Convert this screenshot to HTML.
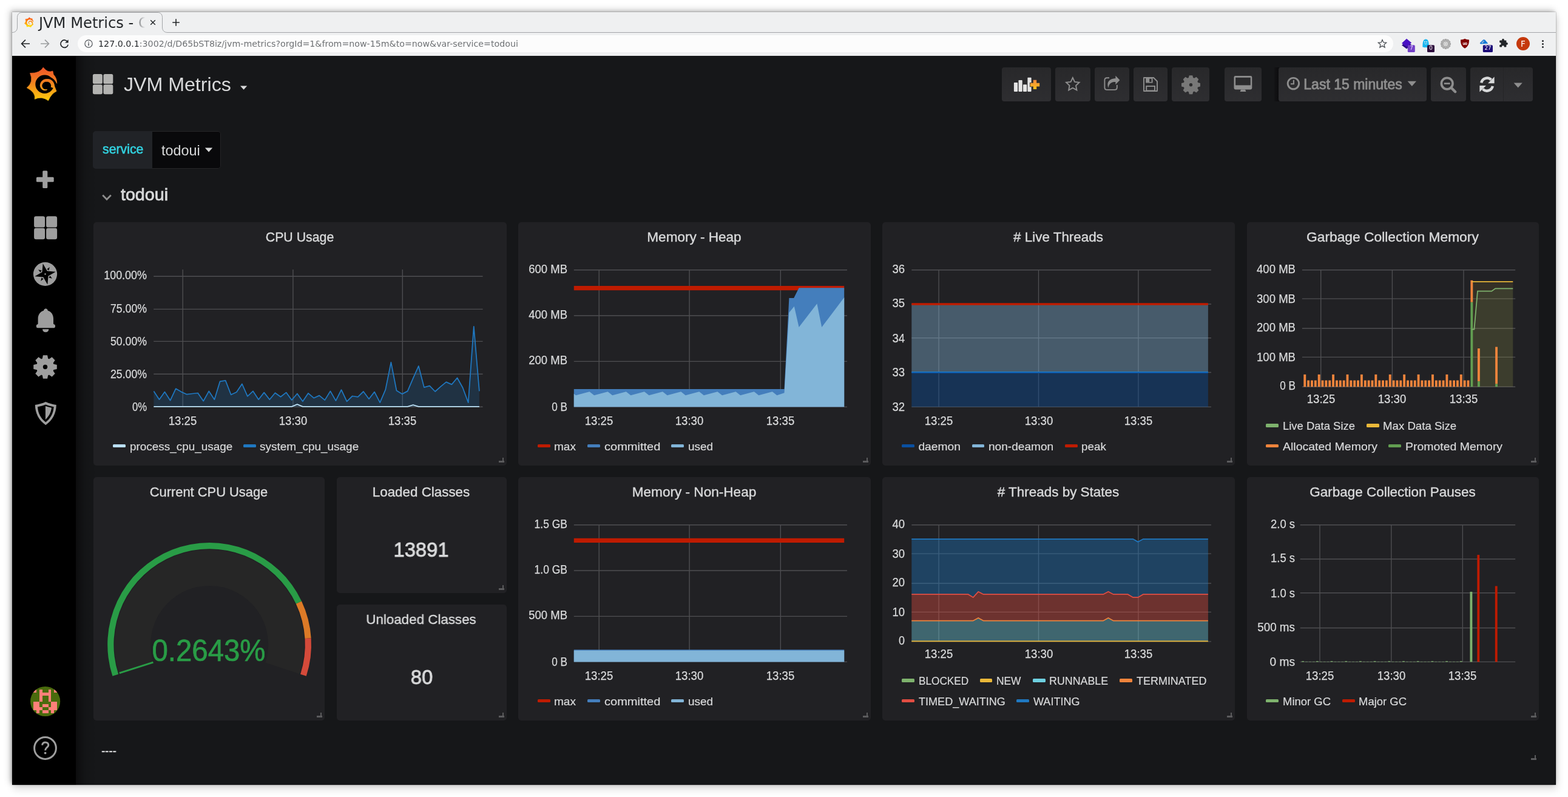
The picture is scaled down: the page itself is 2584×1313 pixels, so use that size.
<!DOCTYPE html>
<html lang="en"><head><meta charset="utf-8"><title>JVM Metrics - Grafana</title>
<style>
html,body{margin:0;padding:0;background:#fff;}
body{width:2584px;height:1313px;position:relative;overflow:hidden;font-family:"Liberation Sans",sans-serif;}
div,span,svg{position:absolute;display:block;}
.t{white-space:pre;line-height:1;}
.win{left:20px;top:20px;width:2544px;height:1273px;background:#161719;box-shadow:0 0 1.5px rgba(0,0,0,.45),-2px -2px 5px rgba(0,0,0,.12),-3px -3px 11px rgba(0,0,0,.22),2px 7px 12px rgba(0,0,0,.14);}

.root{left:0;top:0;width:2584px;height:1313px;will-change:transform;}
.panel{background:#212124;border-radius:5px;}
</style></head>
<body>
<div class="root">
<div class="win"></div>
<div style="left:20.00px;top:20.00px;width:2544.00px;height:72.00px;background:#eff0f1;"></div>
<svg style="left:20px;top:20px;" width="2544" height="36" viewBox="20 20 2544 36"><path d="M20 53.5 C25 53.5 28.5 50.5 28.5 45 L28.5 28.5 C28.5 24 31.5 20.5 36 20.5 L260 20.5 C264.5 20.5 267.5 24 267.5 28.5 L267.5 45 C267.5 50.5 271 53.5 276 53.5 L2564 53.5" fill="none" stroke="#a3a5a8" stroke-width="1"/></svg>
<svg style="left:39px;top:28px;" width="18" height="18" viewBox="0 0 18 18"><g transform="translate(-2.012 -2.835) scale(0.018527)"><defs><linearGradient id="fg" gradientUnits="userSpaceOnUse" x1="0" y1="180" x2="0" y2="1076"><stop offset="0" stop-color="#ff4a0a"/><stop offset="0.45" stop-color="#ff8a08"/><stop offset="1" stop-color="#fff000"/></linearGradient></defs><path d="M610 180 Q732 341 865 278 L886 372 A340 340 0 0 1 976 612 Q905 470 800 440 L893 642 L921 706 L966 824 Q828 886 745 1076 Q568 948 380 1036 Q416 861 168 730 Q361 571 254 336 Q524 342 610 180 Z" fill="url(#fg)" stroke="url(#fg)" stroke-width="12" stroke-linejoin="round"/><circle cx="648" cy="634" r="250" fill="#eff0f1"/><path d="M911 749 L915 730 L917 710 L917 691 L915 672 L913 653 L908 635 L903 618 L896 601 L887 585 L878 570 L867 555 L854 542 L841 531 L827 520 L812 511 L797 504 L781 498 L765 493 L749 490 L732 489 L716 489 L700 490 L684 491 L668 493 L653 497 L638 502 L624 508 L610 516 L597 524 L584 534 L573 545 L562 556 L553 569 L544 582 L537 596 L531 610 L526 625 L523 641 L521 656 L520 672 L523 687 L527 702 L533 717 L539 731 L547 743 L556 755 L565 766 L576 776 L587 785 L600 792 L613 797 L626 800 L639 803 L652 804 L665 803 L677 802 L689 800 L700 796 L710 790 L719 782 L727 774 L727 772 L718 773 L709 772 L700 771 L691 773 L682 773 L673 773 L664 772 L654 770 L645 768 L636 764 L627 759 L618 754 L611 747 L604 739 L598 731 L592 722 L588 713 L584 703 L581 693 L579 683 L578 672 L580 661 L582 651 L585 641 L590 632 L594 623 L600 614 L606 606 L613 599 L621 593 L629 587 L637 582 L645 577 L654 573 L663 570 L672 568 L681 567 L691 567 L700 567 L709 567 L719 567 L728 568 L737 570 L746 573 L755 577 L763 582 L771 587 L779 593 L786 599 L793 607 L799 615 L805 623 L809 632 L813 642 L816 651 L819 662 L820 672 L820 682 L818 693 L816 703 L813 713 Z" fill="url(#fg)"/></g></svg>
<div style="left:62px;top:22px;width:183px;height:30px;overflow:hidden;-webkit-mask-image:linear-gradient(90deg,#000 0,#000 156px,transparent 177px);mask-image:linear-gradient(90deg,#000 0,#000 156px,transparent 177px);"><span class="t" style="left:1.90px;top:4.43px;font-size:24.2px;color:#232629;font-family:'DejaVu Sans',sans-serif;">JVM Metrics - Grafana</span></div>
<svg style="left:246px;top:31px;" width="12" height="12" viewBox="0 0 12 12"><path d="M2.2 2.2 L9.8 9.8 M9.8 2.2 L2.2 9.8" stroke="#232629" stroke-width="1.5" fill="none"/></svg>
<svg style="left:283px;top:30px;" width="14" height="14" viewBox="0 0 14 14"><path d="M7 1.2 V12.8 M1.2 7 H12.8" stroke="#232629" stroke-width="1.6" fill="none"/></svg>
<svg style="left:33px;top:63px;" width="18" height="18" viewBox="0 0 18 18"><path d="M16 9 H3.2 M9 2.6 L2.6 9 L9 15.4" stroke="#232629" stroke-width="1.7" fill="none"/></svg>
<svg style="left:65px;top:63px;" width="18" height="18" viewBox="0 0 18 18"><path d="M2 9 H14.8 M9 2.6 L15.4 9 L9 15.4" stroke="#9b9d9f" stroke-width="1.7" fill="none"/></svg>
<svg style="left:97px;top:63px;" width="18" height="18" viewBox="0 0 18 18"><path d="M14.6 6.2 A6.2 6.2 0 1 0 15.2 10.6" stroke="#232629" stroke-width="1.7" fill="none"/><path d="M15.6 2.2 V7.6 H10.2 Z" fill="#232629"/></svg>
<div style="left:128.00px;top:57.90px;width:2167.50px;height:28.20px;background:#fcfcfc;border-radius:14.1px;"></div>
<svg style="left:138px;top:64px;" width="16" height="16" viewBox="0 0 16 16"><circle cx="8" cy="8" r="6.1" fill="none" stroke="#4d5156" stroke-width="1.2"/><rect x="7.3" y="7" width="1.5" height="4.4" fill="#4d5156"/><rect x="7.3" y="4.6" width="1.5" height="1.5" fill="#4d5156"/></svg>
<span class="t" style="left:162.1px;top:65.10px;font-size:14.19px;font-family:'DejaVu Sans',sans-serif;color:#6f7275;"><span style="position:static;display:inline;color:#232629">127.0.0.1</span>:3002/d/D65bST8iz/jvm-metrics?orgId=1&amp;from=now-15m&amp;to=now&amp;var-service=todoui</span>
<svg style="left:2270px;top:64px;" width="16" height="16" viewBox="0 0 16 16"><path d="M8 1.6 L9.9 6 L14.6 6.4 L11 9.5 L12.1 14.1 L8 11.6 L3.9 14.1 L5 9.5 L1.4 6.4 L6.1 6 Z" fill="none" stroke="#4d5156" stroke-width="1.3" stroke-linejoin="miter"/></svg>
<svg style="left:2308px;top:62px;" width="26" height="26" viewBox="0 0 26 26"><path d="M2 12.4 L10 6 L18.2 12 L10 18.6 Z" fill="#2c0a86"/><path d="M2 9.2 L10 1.8 L18.2 8.6 L10 15 Z" fill="#4a10c4"/><rect x="11.8" y="12.2" width="12" height="11.8" rx="1.6" fill="#7340c8"/></svg>
<span class="t" style="left:2325.90px;top:75.44px;font-size:8.7px;color:#e9ddff;font-family:'DejaVu Sans',sans-serif;transform:translateX(-50%);transform-origin:50% 50%;">7</span>
<svg style="left:2342px;top:62px;" width="26" height="26" viewBox="0 0 26 26"><path d="M2.4 13.6 C2.6 6 4 2.6 7.6 2.6 C11.4 2.6 12.6 6 12.8 13.6 C13 15.6 12 16.6 10.6 15.4 C9.4 16.8 8.6 16.8 7.6 15.6 C6.6 16.8 5.6 16.8 4.6 15.4 C3 16.6 2.2 15.6 2.4 13.6 Z" fill="#18b6f0"/><circle cx="6" cy="7" r="0.9" fill="#eff0f1"/><circle cx="9.2" cy="7" r="0.9" fill="#eff0f1"/><path d="M5.4 9.6 Q7.6 11.6 9.8 9.6" stroke="#eff0f1" stroke-width="0.9" fill="none"/><rect x="10" y="12.2" width="12" height="11.8" rx="1.6" fill="#2d0a3c"/></svg>
<span class="t" style="left:2358.10px;top:75.44px;font-size:8.7px;color:#fff;font-family:'DejaVu Sans',sans-serif;transform:translateX(-50%);transform-origin:50% 50%;">0</span>
<svg style="left:2373.6px;top:63.7px;" width="17" height="17" viewBox="0 0 17 17"><path d="M14.56 7.09 L16.51 7.20 L16.51 9.60 L14.56 9.71 L14.39 10.35 L16.02 11.42 L14.83 13.49 L13.08 12.62 L12.62 13.08 L13.49 14.83 L11.42 16.02 L10.35 14.39 L9.71 14.56 L9.60 16.51 L7.20 16.51 L7.09 14.56 L6.45 14.39 L5.38 16.02 L3.31 14.83 L4.18 13.08 L3.72 12.62 L1.97 13.49 L0.78 11.42 L2.41 10.35 L2.24 9.71 L0.29 9.60 L0.29 7.20 L2.24 7.09 L2.41 6.45 L0.78 5.38 L1.97 3.31 L3.72 4.18 L4.18 3.72 L3.31 1.97 L5.38 0.78 L6.45 2.41 L7.09 2.24 L7.20 0.29 L9.60 0.29 L9.71 2.24 L10.35 2.41 L11.42 0.78 L13.49 1.97 L12.62 3.72 L13.08 4.18 L14.83 3.31 L16.02 5.38 L14.39 6.45 Z" fill="#b4b4b4" stroke="#7c7c7c" stroke-width="0.6"/><circle cx="8.4" cy="8.4" r="4.3" fill="#dcdcdc" stroke="#8d8d8d" stroke-width="0.7"/><circle cx="8.4" cy="8.4" r="1.7" fill="#f4f4f4" stroke="#8a8a8a" stroke-width="0.6"/></svg>
<svg style="left:2406px;top:63px;" width="16" height="18" viewBox="0 0 16 18"><path d="M8 0.8 C10 2 12.4 2.4 15 2.4 C15.2 9 13.4 13.4 8 16.8 C2.6 13.4 0.8 9 1 2.4 C3.6 2.4 6 2 8 0.8 Z" fill="#800000"/></svg>
<span class="t" style="left:2414.00px;top:68.61px;font-size:6.6px;color:#fff;font-weight:700;transform:translateX(-50%);transform-origin:50% 50%;letter-spacing:-0.5px;">uo</span>
<svg style="left:2436px;top:62px;" width="28" height="26" viewBox="0 0 28 26"><path d="M2.6 9 L8.4 3.2 L11 3.4 L16.4 9.8 L4 10.6 Z" fill="#1479d6"/><path d="M5.6 8 L8.6 5 L9.8 6.2 L6.8 9.2 Z" fill="#eff0f1"/><path d="M6.3 8 L8.6 5.8 L9.1 6.3 L6.8 8.6 Z" fill="#1359b0"/><rect x="7.8" y="12.2" width="16.2" height="11.8" rx="1.6" fill="#1c0a78"/></svg>
<span class="t" style="left:2452.00px;top:75.44px;font-size:8.7px;color:#fff;font-family:'DejaVu Sans',sans-serif;transform:translateX(-50%);transform-origin:50% 50%;">27</span>
<svg style="left:2469.1px;top:63.4px;" width="16" height="16" viewBox="0 0 16 16"><path d="M6.2 2.6 A1.8 1.8 0 0 1 9.8 2.6 V3.6 H12.4 Q13.4 3.6 13.4 4.6 V7 H14 A1.9 1.9 0 0 1 14 10.8 H13.4 V13.6 Q13.4 14.6 12.4 14.6 H9.8 V13.9 A1.9 1.9 0 0 0 6 13.9 V14.6 H3.2 Q2.2 14.6 2.2 13.6 V10.9 H2.8 A1.9 1.9 0 0 0 2.8 7.1 H2.2 V4.6 Q2.2 3.6 3.2 3.6 H6.2 Z" fill="#232629"/></svg>
<div style="left:2498.90px;top:60.80px;width:22.00px;height:22.00px;background:#c5390c;border-radius:11px;"></div>
<span class="t" style="left:2510.00px;top:65.88px;font-size:13.5px;color:#fff;font-family:'DejaVu Sans',sans-serif;transform:translateX(-50%);transform-origin:50% 50%;">F</span>
<div style="left:2540.80px;top:66.00px;width:3.40px;height:3.40px;background:#232629;border-radius:1.7px;"></div>
<div style="left:2540.80px;top:70.90px;width:3.40px;height:3.40px;background:#232629;border-radius:1.7px;"></div>
<div style="left:2540.80px;top:75.80px;width:3.40px;height:3.40px;background:#232629;border-radius:1.7px;"></div>
<div style="left:2563.00px;top:92.00px;width:1.00px;height:1201.00px;background:#0a0a0c;"></div>
<div style="left:20.00px;top:92.00px;width:105.00px;height:1201.00px;background:#000;"></div>
<div style="left:125.00px;top:92.00px;width:34.00px;height:1201.00px;background:linear-gradient(90deg,rgba(0,0,0,.46),rgba(0,0,0,.12) 45%,rgba(0,0,0,0));"></div>
<svg style="left:34px;top:100px;" width="80" height="80" viewBox="0 0 80 80"><g transform="scale(0.061115)"><defs><linearGradient id="lg" gradientUnits="userSpaceOnUse" x1="0" y1="180" x2="0" y2="1076"><stop offset="0" stop-color="#f0552a"/><stop offset="0.45" stop-color="#f2811f"/><stop offset="1" stop-color="#fccb0d"/></linearGradient></defs><path d="M610 180 Q732 341 865 278 L886 372 A340 340 0 0 1 976 612 Q905 470 800 440 L893 642 L921 706 L966 824 Q828 886 745 1076 Q568 948 380 1036 Q416 861 168 730 Q361 571 254 336 Q524 342 610 180 Z" fill="url(#lg)" stroke="url(#lg)" stroke-width="12" stroke-linejoin="round"/><circle cx="648" cy="634" r="250" fill="#000"/><path d="M911 749 L915 730 L917 710 L917 691 L915 672 L913 653 L908 635 L903 618 L896 601 L887 585 L878 570 L867 555 L854 542 L841 531 L827 520 L812 511 L797 504 L781 498 L765 493 L749 490 L732 489 L716 489 L700 490 L684 491 L668 493 L653 497 L638 502 L624 508 L610 516 L597 524 L584 534 L573 545 L562 556 L553 569 L544 582 L537 596 L531 610 L526 625 L523 641 L521 656 L520 672 L523 687 L527 702 L533 717 L539 731 L547 743 L556 755 L565 766 L576 776 L587 785 L600 792 L613 797 L626 800 L639 803 L652 804 L665 803 L677 802 L689 800 L700 796 L710 790 L719 782 L727 774 L727 772 L718 773 L709 772 L700 771 L691 773 L682 773 L673 773 L664 772 L654 770 L645 768 L636 764 L627 759 L618 754 L611 747 L604 739 L598 731 L592 722 L588 713 L584 703 L581 693 L579 683 L578 672 L580 661 L582 651 L585 641 L590 632 L594 623 L600 614 L606 606 L613 599 L621 593 L629 587 L637 582 L645 577 L654 573 L663 570 L672 568 L681 567 L691 567 L700 567 L709 567 L719 567 L728 568 L737 570 L746 573 L755 577 L763 582 L771 587 L779 593 L786 599 L793 607 L799 615 L805 623 L809 632 L813 642 L816 651 L819 662 L820 672 L820 682 L818 693 L816 703 L813 713 Z" fill="url(#lg)"/></g></svg>
<svg style="left:56px;top:278px;" width="40" height="36" viewBox="56 278 40 36"><rect x="59.9" y="291.8" width="28.8" height="8" rx="1.6" fill="#9e9e9e"/><rect x="70.2" y="281.2" width="8.1" height="28.9" rx="1.6" fill="#9e9e9e"/></svg>
<svg style="left:54px;top:354px;" width="42" height="42" viewBox="54 354 42 42"><rect x="56.1" y="356.2" width="18" height="18.4" rx="3.2" fill="#9e9e9e"/><rect x="56.1" y="375.8" width="18" height="18.4" rx="3.2" fill="#9e9e9e"/><rect x="76.1" y="356.2" width="18" height="18.4" rx="3.2" fill="#9e9e9e"/><rect x="76.1" y="375.8" width="18" height="18.4" rx="3.2" fill="#9e9e9e"/></svg>
<svg style="left:54px;top:431px;" width="42" height="42" viewBox="54 431 42 42"><circle cx="74.5" cy="451.5" r="19.6" fill="#9e9e9e"/><path d="M91.68 447.69 L79.56 454.72 L78.31 468.68 L71.28 456.56 L57.32 455.31 L69.44 448.28 L70.69 434.32 L77.72 446.44 Z" fill="#000"/><path d="M85.97 458.81 L82.42 454.30 L80.39 457.49 Z" fill="#000"/><path d="M67.19 462.97 L71.70 459.42 L68.51 457.39 Z" fill="#000"/><path d="M63.03 444.19 L66.58 448.70 L68.61 445.51 Z" fill="#000"/><path d="M81.81 440.03 L77.30 443.58 L80.49 445.61 Z" fill="#000"/><circle cx="74.5" cy="451.5" r="1.25" fill="#9e9e9e"/></svg>
<svg style="left:54px;top:506px;" width="42" height="44" viewBox="54 506 42 44"><path d="M75.4 508.6 C77.4 508.6 78.6 510 78.8 511.8 C84.6 513.4 88 518.6 88 525 L88 533.6 L89.2 534.6 C90.6 534.8 91 535.8 91 537.4 C91 539.2 90.2 540.2 88.8 540.2 L62 540.2 C60.6 540.2 59.8 539.2 59.8 537.4 C59.8 535.8 60.4 534.8 61.6 534.6 L62.6 533.6 L62.6 525 C62.6 518.6 66.2 513.4 72 511.8 C72.2 510 73.4 508.6 75.4 508.6 Z" fill="#9e9e9e"/><path d="M70 542.2 L80.4 542.2 C80.2 545.4 78.2 547.2 75.2 547.2 C72.2 547.2 70.2 545.4 70 542.2 Z" fill="#9e9e9e"/></svg>
<svg style="left:54px;top:584px;" width="42" height="42" viewBox="54 584 42 42"><path d="M69.77 590.69 L70.90 585.23 L78.10 585.23 L79.23 590.69 L80.92 591.39 L85.58 588.33 L90.67 593.42 L87.61 598.08 L88.31 599.77 L93.77 600.90 L93.77 608.10 L88.31 609.23 L87.61 610.92 L90.67 615.58 L85.58 620.67 L80.92 617.61 L79.23 618.31 L78.10 623.77 L70.90 623.77 L69.77 618.31 L68.08 617.61 L63.42 620.67 L58.33 615.58 L61.39 610.92 L60.69 609.23 L55.23 608.10 L55.23 600.90 L60.69 599.77 L61.39 598.08 L58.33 593.42 L63.42 588.33 L68.08 591.39 Z" fill="#9e9e9e"/><circle cx="74.5" cy="604.5" r="3.7" fill="#000"/></svg>
<svg style="left:54px;top:660px;" width="42" height="42" viewBox="54 660 42 42"><path d="M75.3 662 C80.6 664.4 86.6 666.2 92.8 667 C92.6 681 86.6 692.4 75.3 700.2 C64 692.4 58 681 57.8 667 C64 666.2 70 664.4 75.3 662 Z" fill="#9e9e9e"/><path d="M75.3 666.4 C79.8 668.2 84 669.4 88.6 670.2 C88 680.6 83.4 689.4 75.3 695.4 C67.2 689.4 62.6 680.6 62 670.2 C66.6 669.4 70.8 668.2 75.3 666.4 Z" fill="#000"/><path d="M74.9 669 C78.2 670 81.6 671 85 671.8 C84 679.6 80.6 686 74.9 691.2 Z" fill="#9e9e9e"/></svg>
<svg style="left:48px;top:1129px;" width="54" height="54" viewBox="48 1129 54 54"><defs><clipPath id="av"><circle cx="74.6" cy="1155.5" r="24.6"/></clipPath></defs><g clip-path="url(#av)"><rect x="48" y="1129" width="54" height="54" fill="#4a6b0d"/><g fill="#ff8079" shape-rendering="crispEdges"><rect x="55.00" y="1135.90" width="4.95" height="4.95"/><rect x="64.80" y="1135.90" width="4.95" height="4.95"/><rect x="79.50" y="1135.90" width="4.95" height="4.95"/><rect x="89.30" y="1135.90" width="4.95" height="4.95"/><rect x="64.80" y="1140.80" width="4.95" height="4.95"/><rect x="69.70" y="1140.80" width="4.95" height="4.95"/><rect x="74.60" y="1140.80" width="4.95" height="4.95"/><rect x="79.50" y="1140.80" width="4.95" height="4.95"/><rect x="64.80" y="1145.70" width="4.95" height="4.95"/><rect x="79.50" y="1145.70" width="4.95" height="4.95"/><rect x="64.80" y="1150.60" width="4.95" height="4.95"/><rect x="79.50" y="1150.60" width="4.95" height="4.95"/><rect x="55.00" y="1155.50" width="4.95" height="4.95"/><rect x="59.90" y="1155.50" width="4.95" height="4.95"/><rect x="84.40" y="1155.50" width="4.95" height="4.95"/><rect x="89.30" y="1155.50" width="4.95" height="4.95"/><rect x="55.00" y="1160.40" width="4.95" height="4.95"/><rect x="59.90" y="1160.40" width="4.95" height="4.95"/><rect x="69.70" y="1160.40" width="4.95" height="4.95"/><rect x="74.60" y="1160.40" width="4.95" height="4.95"/><rect x="84.40" y="1160.40" width="4.95" height="4.95"/><rect x="89.30" y="1160.40" width="4.95" height="4.95"/><rect x="55.00" y="1165.30" width="4.95" height="4.95"/><rect x="59.90" y="1165.30" width="4.95" height="4.95"/><rect x="64.80" y="1165.30" width="4.95" height="4.95"/><rect x="79.50" y="1165.30" width="4.95" height="4.95"/><rect x="84.40" y="1165.30" width="4.95" height="4.95"/><rect x="89.30" y="1165.30" width="4.95" height="4.95"/><rect x="59.90" y="1170.20" width="4.95" height="4.95"/><rect x="69.70" y="1170.20" width="4.95" height="4.95"/><rect x="74.60" y="1170.20" width="4.95" height="4.95"/><rect x="84.40" y="1170.20" width="4.95" height="4.95"/></g></g></svg>
<svg style="left:52px;top:1210px;" width="46" height="46" viewBox="52 1210 46 46"><circle cx="74.5" cy="1232.5" r="17.9" fill="none" stroke="#9e9e9e" stroke-width="3"/><path d="M69.6 1227.6 C70 1224.4 72 1223 74.8 1223 C77.8 1223 79.8 1224.8 79.8 1227.4 C79.8 1231.4 74.6 1231.6 74.6 1236.2" fill="none" stroke="#9e9e9e" stroke-width="3"/><circle cx="74.6" cy="1240.6" r="1.9" fill="#9e9e9e"/></svg>
<svg style="left:152px;top:121px;" width="36" height="36" viewBox="152 121 36 36"><rect x="152.9" y="122.1" width="15.9" height="15.9" rx="2.6" fill="#b3b3b1"/><rect x="152.9" y="139.3" width="15.9" height="15.9" rx="2.6" fill="#b3b3b1"/><rect x="170.4" y="122.1" width="15.9" height="15.9" rx="2.6" fill="#b3b3b1"/><rect x="170.4" y="139.3" width="15.9" height="15.9" rx="2.6" fill="#b3b3b1"/></svg>
<span class="t" style="left:203.60px;top:123.62px;font-size:31.4px;color:#d8d9da;transform:scaleX(1.0240);transform-origin:0 50%;">JVM Metrics</span>
<svg style="left:394px;top:139px;" width="16" height="12" viewBox="394 139 16 12"><path d="M396 141.6 L407.2 141.6 L401.6 147.8 Z" fill="#d8d9da"/></svg>
<div style="left:1651.00px;top:111.00px;width:81.00px;height:55.80px;background:linear-gradient(#28282a,#2e2e31);border-radius:4px;"></div>
<div style="left:1739.00px;top:111.00px;width:58.00px;height:55.80px;background:linear-gradient(#28282a,#2e2e31);border-radius:4px;"></div>
<div style="left:1804.00px;top:111.00px;width:57.00px;height:55.80px;background:linear-gradient(#28282a,#2e2e31);border-radius:4px;"></div>
<div style="left:1868.20px;top:111.00px;width:55.70px;height:55.80px;background:linear-gradient(#28282a,#2e2e31);border-radius:4px;"></div>
<div style="left:1931.20px;top:111.00px;width:61.70px;height:55.80px;background:linear-gradient(#28282a,#2e2e31);border-radius:4px;"></div>
<div style="left:2018.00px;top:111.00px;width:61.00px;height:55.80px;background:linear-gradient(#28282a,#2e2e31);border-radius:4px;"></div>
<svg style="left:1668px;top:124px;" width="50" height="30" viewBox="1668 124 50 30"><defs><linearGradient id="pl" x1="0" y1="0" x2="0" y2="1"><stop offset="0" stop-color="#f0883e"/><stop offset="1" stop-color="#fcc21b"/></linearGradient></defs><rect x="1670.9" y="136" width="6.2" height="14.9" rx="0.8" fill="#e4e4e4"/><rect x="1678.5" y="132" width="6.2" height="18.9" rx="0.8" fill="#e4e4e4"/><rect x="1686" y="139.3" width="6.2" height="11.6" rx="0.8" fill="#e4e4e4"/><rect x="1693.4" y="127.8" width="6.2" height="23.1" rx="0.8" fill="#e4e4e4"/><path d="M1702.8 131.8 H1708.2 V136.7 H1713.2 V142.5 H1708.2 V147.1 H1702.8 V142.5 H1697.7 V136.7 H1702.8 Z" fill="url(#pl)" stroke="#2b2b2d" stroke-width="1.6" paint-order="stroke"/></svg>
<svg style="left:1750px;top:122px;" width="36" height="36" viewBox="1750 122 36 36"><path d="M1767.80 128.00 L1771.03 134.85 L1778.55 135.81 L1773.03 141.00 L1774.44 148.44 L1767.80 144.80 L1761.16 148.44 L1762.57 141.00 L1757.05 135.81 L1764.57 134.85 Z" fill="none" stroke="#8e8e8e" stroke-width="1.9"/></svg>
<svg style="left:1816px;top:122px;" width="34" height="30" viewBox="1816 122 34 30"><path d="M1828 128.2 H1824.2 Q1820.4 128.2 1820.4 132 V144 Q1820.4 147.9 1824.2 147.9 H1837 Q1840.8 147.9 1840.8 144 V140" fill="none" stroke="#8e8e8e" stroke-width="1.9"/><path d="M1838.4 124.8 L1845.4 132 L1838.4 139.2 V134.9 C1832 134.6 1827.6 137 1826.6 144.6 C1823.6 137 1826.4 129.4 1838.4 129.2 Z" fill="#8e8e8e"/></svg>
<svg style="left:1880px;top:124px;" width="32" height="30" viewBox="1880 124 32 30"><path d="M1885 128 H1901 L1907 134 V150 H1885 Z" fill="none" stroke="#8e8e8e" stroke-width="1.9" stroke-linejoin="round"/><path d="M1888.2 128.6 H1899.6 V136.6 H1888.2 Z M1894.2 129.8 V135 H1897.6 V129.8 Z" fill="#8e8e8e" fill-rule="evenodd"/><rect x="1889.2" y="142" width="13.8" height="7.4" fill="none" stroke="#8e8e8e" stroke-width="1.9"/></svg>
<svg style="left:1944px;top:122px;" width="38" height="36" viewBox="1944 122 38 36"><path d="M1958.73 128.10 L1959.80 124.23 L1965.20 124.23 L1966.27 128.10 L1968.04 128.83 L1971.53 126.86 L1975.34 130.67 L1973.37 134.16 L1974.10 135.93 L1977.97 137.00 L1977.97 142.40 L1974.10 143.47 L1973.37 145.24 L1975.34 148.73 L1971.53 152.54 L1968.04 150.57 L1966.27 151.30 L1965.20 155.17 L1959.80 155.17 L1958.73 151.30 L1956.96 150.57 L1953.47 152.54 L1949.66 148.73 L1951.63 145.24 L1950.90 143.47 L1947.03 142.40 L1947.03 137.00 L1950.90 135.93 L1951.63 134.16 L1949.66 130.67 L1953.47 126.86 L1956.96 128.83 Z" fill="#787878"/><circle cx="1962.5" cy="139.7" r="2.7" fill="#2b2b2d"/></svg>
<svg style="left:2030px;top:122px;" width="38" height="32" viewBox="2030 122 38 32"><path d="M1935.7 0 H0" fill="none"/><rect x="2033.5" y="125" width="29.8" height="22.4" rx="2.4" fill="#8e8e8e"/><rect x="2036.1" y="127.8" width="24.7" height="12.6" fill="#2b2b2d"/><path d="M2045 147.4 H2052 L2053.4 151 H2043.6 Z" fill="#8e8e8e"/></svg>
<div style="left:2100.40px;top:111.00px;width:8.00px;height:55.80px;background:linear-gradient(90deg,#131315,#0c0c0e);"></div>
<div style="left:2107.20px;top:111.00px;width:243.80px;height:55.80px;background:linear-gradient(#28282a,#2e2e31);border-radius:4px;"></div>
<svg style="left:2118px;top:125px;" width="26" height="26" viewBox="2118 125 26 26"><circle cx="2131.4" cy="137.6" r="9.2" fill="none" stroke="#8e8e8e" stroke-width="2.9"/><path d="M2131.9 131.8 V138.3 H2127" fill="none" stroke="#8e8e8e" stroke-width="2.1"/></svg>
<span class="t" style="left:2148.30px;top:128.03px;font-size:23.0px;color:#8e8e8e;-webkit-text-stroke:0.85px #8e8e8e;">Last 15 minutes</span>
<svg style="left:2318px;top:132px;" width="18" height="12" viewBox="2318 132 18 12"><path d="M2319.6 133.8 H2334 L2326.8 142 Z" fill="#8e8e8e"/></svg>
<div style="left:2358.00px;top:111.00px;width:58.00px;height:55.80px;background:linear-gradient(#28282a,#2e2e31);border-radius:4px;"></div>
<svg style="left:2370px;top:124px;" width="34" height="32" viewBox="2370 124 34 32"><circle cx="2384.7" cy="137.6" r="9.3" fill="none" stroke="#8e8e8e" stroke-width="3.7"/><path d="M2392 145 L2398.2 151.2" stroke="#8e8e8e" stroke-width="4.4" stroke-linecap="round"/><path d="M2379.8 137.6 H2389.6" stroke="#8e8e8e" stroke-width="2.7"/></svg>
<div style="left:2423.00px;top:111.00px;width:103.00px;height:55.80px;background:linear-gradient(#28282a,#2e2e31);border-radius:4px;"></div>
<div style="left:2476.60px;top:111.00px;width:1.00px;height:55.80px;background:#252527;"></div>
<svg style="left:2436px;top:124px;" width="30" height="30" viewBox="2436 124 30 30"><path d="M2441.2 136.4 A9.6 9.6 0 0 1 2457.4 131.4" fill="none" stroke="#d8d9da" stroke-width="4.4"/><path d="M2462.6 126.6 V137.2 H2452 Z" fill="#d8d9da"/><path d="M2459.8 141.8 A9.6 9.6 0 0 1 2443.6 146.8" fill="none" stroke="#d8d9da" stroke-width="4.4"/><path d="M2438.4 151.6 V141 H2449 Z" fill="#d8d9da"/></svg>
<svg style="left:2492px;top:134px;" width="20" height="12" viewBox="2492 134 20 12"><path d="M2494.6 136.4 H2508.8 L2501.7 144.4 Z" fill="#8e8e8e"/></svg>
<div style="left:153.00px;top:216.40px;width:211.20px;height:61.20px;background:#09090b;border-radius:5px;box-shadow:inset 0 0 0 1px #262628;"></div>
<div style="left:153.00px;top:216.40px;width:98.20px;height:61.20px;background:#212327;border-radius:5px 0 0 5px;"></div>
<span class="t" style="left:169.20px;top:236.18px;font-size:21.4px;color:#32d1df;-webkit-text-stroke:0.6px #32d1df;transform:scaleX(0.9946);transform-origin:0 50%;">service</span>
<span class="t" style="left:266.40px;top:237.29px;font-size:23.4px;color:#d8d9da;transform:scaleX(0.9979);transform-origin:0 50%;">todoui</span>
<svg style="left:336px;top:241px;" width="16" height="12" viewBox="336 241 16 12"><path d="M337.8 243.4 H350.2 L344 250.6 Z" fill="#d8d9da"/></svg>
<svg style="left:166px;top:318px;" width="20" height="14" viewBox="166 318 20 14"><path d="M169.2 321.6 L176 328.4 L182.8 321.6" fill="none" stroke="#8e8e8e" stroke-width="2.8"/></svg>
<span class="t" style="left:199.00px;top:305.96px;font-size:28.4px;color:#d8d9da;-webkit-text-stroke:0.85px #d8d9da;transform:scaleX(1.0083);transform-origin:0 50%;">todoui</span>
<span class="t" style="left:167.30px;top:1225.10px;font-size:22.8px;color:#d8d9da;-webkit-text-stroke:0.3px #d8d9da;transform:scaleX(0.8165);transform-origin:0 50%;">----</span>
<div style="left:154.00px;top:366.00px;width:681.00px;height:401.00px;background:#212124;border-radius:5px;"></div>
<span class="t" style="left:493.90px;top:379.00px;font-size:22.8px;color:#d8d9da;-webkit-text-stroke:0.4px #d8d9da;transform:translateX(-50%) scaleX(0.9346);transform-origin:50% 50%;">CPU Usage</span>
<div style="left:822.0px;top:759.1px;width:8.5px;height:2.9px;background:#5b5b5d"></div><div style="left:827.6px;top:754.3px;width:2.9px;height:7.7px;background:#5b5b5d"></div>
<div style="left:854.00px;top:366.00px;width:581.00px;height:401.00px;background:#212124;border-radius:5px;"></div>
<span class="t" style="left:1143.90px;top:379.00px;font-size:22.8px;color:#d8d9da;-webkit-text-stroke:0.4px #d8d9da;transform:translateX(-50%) scaleX(0.9886);transform-origin:50% 50%;">Memory - Heap</span>
<div style="left:1422.0px;top:759.1px;width:8.5px;height:2.9px;background:#5b5b5d"></div><div style="left:1427.6px;top:754.3px;width:2.9px;height:7.7px;background:#5b5b5d"></div>
<div style="left:1454.00px;top:366.00px;width:581.00px;height:401.00px;background:#212124;border-radius:5px;"></div>
<span class="t" style="left:1743.90px;top:379.00px;font-size:22.8px;color:#d8d9da;-webkit-text-stroke:0.4px #d8d9da;transform:translateX(-50%) scaleX(0.9828);transform-origin:50% 50%;"># Live Threads</span>
<div style="left:2022.0px;top:759.1px;width:8.5px;height:2.9px;background:#5b5b5d"></div><div style="left:2027.6px;top:754.3px;width:2.9px;height:7.7px;background:#5b5b5d"></div>
<div style="left:2055.00px;top:366.00px;width:481.00px;height:401.00px;background:#212124;border-radius:5px;"></div>
<span class="t" style="left:2294.90px;top:379.00px;font-size:22.8px;color:#d8d9da;-webkit-text-stroke:0.4px #d8d9da;transform:translateX(-50%);transform-origin:50% 50%;">Garbage Collection Memory</span>
<div style="left:2523.0px;top:759.1px;width:8.5px;height:2.9px;background:#5b5b5d"></div><div style="left:2528.6px;top:754.3px;width:2.9px;height:7.7px;background:#5b5b5d"></div>
<div style="left:154.00px;top:786.00px;width:381.00px;height:401.00px;background:#212124;border-radius:5px;"></div>
<span class="t" style="left:343.90px;top:799.00px;font-size:22.8px;color:#d8d9da;-webkit-text-stroke:0.4px #d8d9da;transform:translateX(-50%) scaleX(0.9595);transform-origin:50% 50%;">Current CPU Usage</span>
<div style="left:522.0px;top:1179.1px;width:8.5px;height:2.9px;background:#5b5b5d"></div><div style="left:527.6px;top:1174.3px;width:2.9px;height:7.7px;background:#5b5b5d"></div>
<div style="left:555.00px;top:786.00px;width:280.00px;height:191.00px;background:#212124;border-radius:5px;"></div>
<span class="t" style="left:694.40px;top:799.00px;font-size:22.8px;color:#d8d9da;-webkit-text-stroke:0.4px #d8d9da;transform:translateX(-50%) scaleX(0.9810);transform-origin:50% 50%;">Loaded Classes</span>
<div style="left:822.0px;top:969.1px;width:8.5px;height:2.9px;background:#5b5b5d"></div><div style="left:827.6px;top:964.3px;width:2.9px;height:7.7px;background:#5b5b5d"></div>
<div style="left:555.00px;top:996.00px;width:280.00px;height:191.00px;background:#212124;border-radius:5px;"></div>
<span class="t" style="left:694.40px;top:1009.00px;font-size:22.8px;color:#d8d9da;-webkit-text-stroke:0.4px #d8d9da;transform:translateX(-50%) scaleX(0.9805);transform-origin:50% 50%;">Unloaded Classes</span>
<div style="left:822.0px;top:1179.1px;width:8.5px;height:2.9px;background:#5b5b5d"></div><div style="left:827.6px;top:1174.3px;width:2.9px;height:7.7px;background:#5b5b5d"></div>
<div style="left:854.00px;top:786.00px;width:581.00px;height:401.00px;background:#212124;border-radius:5px;"></div>
<span class="t" style="left:1143.90px;top:799.00px;font-size:22.8px;color:#d8d9da;-webkit-text-stroke:0.4px #d8d9da;transform:translateX(-50%) scaleX(0.9903);transform-origin:50% 50%;">Memory - Non-Heap</span>
<div style="left:1422.0px;top:1179.1px;width:8.5px;height:2.9px;background:#5b5b5d"></div><div style="left:1427.6px;top:1174.3px;width:2.9px;height:7.7px;background:#5b5b5d"></div>
<div style="left:1454.00px;top:786.00px;width:581.00px;height:401.00px;background:#212124;border-radius:5px;"></div>
<span class="t" style="left:1743.90px;top:799.00px;font-size:22.8px;color:#d8d9da;-webkit-text-stroke:0.4px #d8d9da;transform:translateX(-50%) scaleX(0.9842);transform-origin:50% 50%;"># Threads by States</span>
<div style="left:2022.0px;top:1179.1px;width:8.5px;height:2.9px;background:#5b5b5d"></div><div style="left:2027.6px;top:1174.3px;width:2.9px;height:7.7px;background:#5b5b5d"></div>
<div style="left:2055.00px;top:786.00px;width:481.00px;height:401.00px;background:#212124;border-radius:5px;"></div>
<span class="t" style="left:2294.90px;top:799.00px;font-size:22.8px;color:#d8d9da;-webkit-text-stroke:0.4px #d8d9da;transform:translateX(-50%) scaleX(0.9855);transform-origin:50% 50%;">Garbage Collection Pauses</span>
<div style="left:2523.0px;top:1179.1px;width:8.5px;height:2.9px;background:#5b5b5d"></div><div style="left:2528.6px;top:1174.3px;width:2.9px;height:7.7px;background:#5b5b5d"></div>
<svg style="left:154px;top:366px;" width="681" height="401" viewBox="154 366 681 401"><g stroke="#4f4f52" stroke-width="1.35" fill="none"><path d="M253.2 455.2 H795.6"/><path d="M253.2 509.3 H795.6"/><path d="M253.2 562.3 H795.6"/><path d="M253.2 616.2 H795.6"/><path d="M253.2 670.2 H795.6"/><path d="M301.2 444.0 V670.2"/><path d="M482.9 444.0 V670.2"/><path d="M663.3 444.0 V670.2"/></g><path d="M253.4 644.4 L262.5 658.2 L271.5 645.6 L280.6 659.7 L289.7 640.3 L298.8 645.6 L307.9 649.7 L317.0 648.5 L326.1 647.5 L335.2 660.7 L344.3 644.4 L353.4 658.2 L362.5 628.4 L371.6 626.9 L380.7 650.3 L389.8 646.0 L398.9 632.5 L407.9 652.8 L417.0 644.4 L426.1 658.2 L435.2 646.6 L444.3 658.2 L453.4 647.2 L462.5 653.8 L471.6 646.6 L480.7 659.1 L489.8 648.5 L498.9 661.3 L508.0 647.8 L517.1 655.7 L526.2 651.6 L535.3 659.1 L544.4 644.4 L553.4 660.1 L562.5 642.2 L571.6 661.3 L580.7 652.5 L589.8 653.8 L598.9 645.0 L608.0 657.2 L617.1 645.6 L626.2 663.2 L635.3 641.9 L644.4 596.8 L653.5 643.5 L662.6 649.1 L671.7 644.4 L680.8 623.1 L689.8 603.0 L698.9 638.1 L708.0 635.6 L717.1 645.0 L726.2 636.9 L735.3 629.4 L744.4 633.4 L753.5 622.5 L762.6 638.8 L771.7 663.2 L780.8 537.9 L789.9 644.4 L789.9 670.2 L253.4 670.2 Z" fill="#1f78c1" fill-opacity="0.2"/><path d="M253.4 644.4 L262.5 658.2 L271.5 645.6 L280.6 659.7 L289.7 640.3 L298.8 645.6 L307.9 649.7 L317.0 648.5 L326.1 647.5 L335.2 660.7 L344.3 644.4 L353.4 658.2 L362.5 628.4 L371.6 626.9 L380.7 650.3 L389.8 646.0 L398.9 632.5 L407.9 652.8 L417.0 644.4 L426.1 658.2 L435.2 646.6 L444.3 658.2 L453.4 647.2 L462.5 653.8 L471.6 646.6 L480.7 659.1 L489.8 648.5 L498.9 661.3 L508.0 647.8 L517.1 655.7 L526.2 651.6 L535.3 659.1 L544.4 644.4 L553.4 660.1 L562.5 642.2 L571.6 661.3 L580.7 652.5 L589.8 653.8 L598.9 645.0 L608.0 657.2 L617.1 645.6 L626.2 663.2 L635.3 641.9 L644.4 596.8 L653.5 643.5 L662.6 649.1 L671.7 644.4 L680.8 623.1 L689.8 603.0 L698.9 638.1 L708.0 635.6 L717.1 645.0 L726.2 636.9 L735.3 629.4 L744.4 633.4 L753.5 622.5 L762.6 638.8 L771.7 663.2 L780.8 537.9 L789.9 644.4" fill="none" stroke="#1f78c1" stroke-width="1.75" stroke-linejoin="round"/><path d="M253.4 669.9 L262.5 669.9 L271.5 669.9 L280.6 669.9 L289.7 669.9 L298.8 669.9 L307.9 669.9 L317.0 669.9 L326.1 669.9 L335.2 669.9 L344.3 669.9 L353.4 669.9 L362.5 669.9 L371.6 669.9 L380.7 669.9 L389.8 669.9 L398.9 669.9 L407.9 669.9 L417.0 669.9 L426.1 669.9 L435.2 669.9 L444.3 669.9 L453.4 669.9 L462.5 669.9 L471.6 669.9 L480.7 669.9 L489.8 666.1 L498.9 669.9 L508.0 669.9 L517.1 669.9 L526.2 669.9 L535.3 669.9 L544.4 669.9 L553.4 669.9 L562.5 669.9 L571.6 669.9 L580.7 669.9 L589.8 669.9 L598.9 669.9 L608.0 669.9 L617.1 669.9 L626.2 669.9 L635.3 669.9 L644.4 669.9 L653.5 669.9 L662.6 669.9 L671.7 669.9 L680.8 667.1 L689.8 669.9 L698.9 669.9 L708.0 669.9 L717.1 669.9 L726.2 669.9 L735.3 669.9 L744.4 669.9 L753.5 669.9 L762.6 669.9 L771.7 669.9 L780.8 669.9 L789.9 669.9" fill="none" stroke="#badff4" stroke-width="1.75" stroke-linejoin="round"/></svg>
<span class="t" style="left:242.20px;top:443.91px;font-size:19.6px;color:#d8d9da;-webkit-text-stroke:0.25px #d8d9da;transform:translateX(-100%) scaleX(0.9152);transform-origin:100% 50%;">100.00%</span>
<span class="t" style="left:242.20px;top:499.01px;font-size:19.6px;color:#d8d9da;-webkit-text-stroke:0.25px #d8d9da;transform:translateX(-100%) scaleX(0.9027);transform-origin:100% 50%;">75.00%</span>
<span class="t" style="left:242.20px;top:552.91px;font-size:19.6px;color:#d8d9da;-webkit-text-stroke:0.25px #d8d9da;transform:translateX(-100%) scaleX(0.9027);transform-origin:100% 50%;">50.00%</span>
<span class="t" style="left:242.20px;top:607.01px;font-size:19.6px;color:#d8d9da;-webkit-text-stroke:0.25px #d8d9da;transform:translateX(-100%) scaleX(0.9027);transform-origin:100% 50%;">25.00%</span>
<span class="t" style="left:242.20px;top:661.01px;font-size:19.6px;color:#d8d9da;-webkit-text-stroke:0.25px #d8d9da;transform:translateX(-100%) scaleX(0.8472);transform-origin:100% 50%;">0%</span>
<span class="t" style="left:301.20px;top:684.01px;font-size:19.6px;color:#d8d9da;-webkit-text-stroke:0.25px #d8d9da;transform:translateX(-50%) scaleX(0.9481);transform-origin:50% 50%;">13:25</span>
<span class="t" style="left:482.90px;top:684.01px;font-size:19.6px;color:#d8d9da;-webkit-text-stroke:0.25px #d8d9da;transform:translateX(-50%) scaleX(0.9481);transform-origin:50% 50%;">13:30</span>
<span class="t" style="left:663.30px;top:684.01px;font-size:19.6px;color:#d8d9da;-webkit-text-stroke:0.25px #d8d9da;transform:translateX(-50%) scaleX(0.9481);transform-origin:50% 50%;">13:35</span>
<div style="left:186.20px;top:732.10px;width:20.90px;height:5.40px;background:#badff4;border-radius:1.5px;"></div>
<span class="t" style="left:213.50px;top:725.90px;font-size:19.25px;color:#d8d9da;-webkit-text-stroke:0.2px #d8d9da;transform:scaleX(0.9819);transform-origin:0 50%;">process_cpu_usage</span>
<div style="left:401.10px;top:732.10px;width:20.90px;height:5.40px;background:#1f78c1;border-radius:1.5px;"></div>
<span class="t" style="left:428.00px;top:725.90px;font-size:19.25px;color:#d8d9da;-webkit-text-stroke:0.2px #d8d9da;transform:scaleX(0.9839);transform-origin:0 50%;">system_cpu_usage</span>
<svg style="left:854px;top:366px;" width="581" height="401" viewBox="854 366 581 401"><g stroke="#4f4f52" stroke-width="1.35" fill="none"><path d="M945.8 444.7 H1396.0"/><path d="M945.8 520.0 H1396.0"/><path d="M945.8 595.3 H1396.0"/><path d="M945.8 670.3 H1396.0"/><path d="M987.2 444.0 V670.3"/><path d="M1136.1 444.0 V670.3"/><path d="M1286.3 444.0 V670.3"/></g><path d="M945.8 474.6 H1391.2" stroke="#bf1b00" stroke-width="7.2" fill="none"/><path d="M945.8 640.9 L1292.5 640.9 L1300.4 490.9 L1308.2 490.9 L1316.6 474.3 L1391.2 474.3 L1391.2 670.3 L945.8 670.3 Z" fill="#447ebc"/><path d="M945.8 648.8 L949.0 651.3 L971.5 645.3 L979.1 651.3 L1001.6 645.3 L1009.2 651.3 L1031.8 645.3 L1039.4 651.3 L1061.9 645.3 L1069.5 651.3 L1092.0 645.3 L1099.6 651.3 L1122.2 645.3 L1129.7 651.3 L1152.3 645.3 L1159.9 651.3 L1182.4 645.3 L1190.0 651.3 L1212.5 645.3 L1220.1 651.3 L1242.7 645.3 L1250.3 651.3 L1272.8 645.3 L1280.4 651.3 L1292.5 647.2 L1300.4 515.0 L1308.8 504.7 L1316.6 539.1 L1346.4 500.3 L1354.2 539.1 L1391.2 490.0 L1391.2 670.3 L945.8 670.3 Z" fill="#82b5d8"/></svg>
<span class="t" style="left:934.80px;top:433.91px;font-size:19.6px;color:#d8d9da;-webkit-text-stroke:0.25px #d8d9da;transform:translateX(-100%) scaleX(0.9447);transform-origin:100% 50%;">600 MB</span>
<span class="t" style="left:934.80px;top:508.71px;font-size:19.6px;color:#d8d9da;-webkit-text-stroke:0.25px #d8d9da;transform:translateX(-100%) scaleX(0.9447);transform-origin:100% 50%;">400 MB</span>
<span class="t" style="left:934.80px;top:583.81px;font-size:19.6px;color:#d8d9da;-webkit-text-stroke:0.25px #d8d9da;transform:translateX(-100%) scaleX(0.9447);transform-origin:100% 50%;">200 MB</span>
<span class="t" style="left:934.80px;top:661.01px;font-size:19.6px;color:#d8d9da;-webkit-text-stroke:0.25px #d8d9da;transform:translateX(-100%) scaleX(0.8769);transform-origin:100% 50%;">0 B</span>
<span class="t" style="left:987.20px;top:684.01px;font-size:19.6px;color:#d8d9da;-webkit-text-stroke:0.25px #d8d9da;transform:translateX(-50%) scaleX(0.9481);transform-origin:50% 50%;">13:25</span>
<span class="t" style="left:1136.10px;top:684.01px;font-size:19.6px;color:#d8d9da;-webkit-text-stroke:0.25px #d8d9da;transform:translateX(-50%) scaleX(0.9481);transform-origin:50% 50%;">13:30</span>
<span class="t" style="left:1286.30px;top:684.01px;font-size:19.6px;color:#d8d9da;-webkit-text-stroke:0.25px #d8d9da;transform:translateX(-50%) scaleX(0.9481);transform-origin:50% 50%;">13:35</span>
<div style="left:886.20px;top:732.10px;width:20.90px;height:5.40px;background:#bf1b00;border-radius:1.5px;"></div>
<span class="t" style="left:913.40px;top:725.90px;font-size:19.25px;color:#d8d9da;-webkit-text-stroke:0.2px #d8d9da;transform:scaleX(0.9897);transform-origin:0 50%;">max</span>
<div style="left:968.00px;top:732.10px;width:20.90px;height:5.40px;background:#447ebc;border-radius:1.5px;"></div>
<span class="t" style="left:995.50px;top:725.90px;font-size:19.25px;color:#d8d9da;-webkit-text-stroke:0.2px #d8d9da;transform:scaleX(1.0406);transform-origin:0 50%;">committed</span>
<div style="left:1106.40px;top:732.10px;width:20.90px;height:5.40px;background:#82b5d8;border-radius:1.5px;"></div>
<span class="t" style="left:1133.90px;top:725.90px;font-size:19.25px;color:#d8d9da;-webkit-text-stroke:0.2px #d8d9da;transform:scaleX(0.9844);transform-origin:0 50%;">used</span>
<svg style="left:1454px;top:366px;" width="581" height="401" viewBox="1454 366 581 401"><g stroke="#4f4f52" stroke-width="1.35" fill="none"><path d="M1502.3 444.7 H1996.0"/><path d="M1502.3 501.0 H1996.0"/><path d="M1502.3 556.7 H1996.0"/><path d="M1502.3 613.5 H1996.0"/><path d="M1502.3 670.4 H1996.0"/><path d="M1547.1 444.0 V670.4"/><path d="M1711.5 444.0 V670.4"/><path d="M1875.9 444.0 V670.4"/></g><rect x="1502.3" y="614.0" width="488.6" height="56.4" fill="#0a50a1" fill-opacity="0.4"/><rect x="1502.3" y="501.0" width="488.6" height="113.0" fill="#82b5d8" fill-opacity="0.4"/><path d="M1502.3 614.0 H1990.9" stroke="#0a50a1" stroke-width="1.8"/><path d="M1502.3 612.8 H1990.9" stroke="#1f78c1" stroke-width="1.4"/><path d="M1502.3 501.0 H1990.9" stroke="#bf1b00" stroke-width="3.4"/></svg>
<span class="t" style="left:1491.40px;top:433.91px;font-size:19.6px;color:#d8d9da;-webkit-text-stroke:0.25px #d8d9da;transform:translateX(-100%) scaleX(0.9451);transform-origin:100% 50%;">36</span>
<span class="t" style="left:1491.40px;top:490.11px;font-size:19.6px;color:#d8d9da;-webkit-text-stroke:0.25px #d8d9da;transform:translateX(-100%) scaleX(0.9451);transform-origin:100% 50%;">35</span>
<span class="t" style="left:1491.40px;top:547.91px;font-size:19.6px;color:#d8d9da;-webkit-text-stroke:0.25px #d8d9da;transform:translateX(-100%) scaleX(0.9451);transform-origin:100% 50%;">34</span>
<span class="t" style="left:1491.40px;top:604.11px;font-size:19.6px;color:#d8d9da;-webkit-text-stroke:0.25px #d8d9da;transform:translateX(-100%) scaleX(0.9451);transform-origin:100% 50%;">33</span>
<span class="t" style="left:1491.40px;top:661.01px;font-size:19.6px;color:#d8d9da;-webkit-text-stroke:0.25px #d8d9da;transform:translateX(-100%) scaleX(0.9451);transform-origin:100% 50%;">32</span>
<span class="t" style="left:1547.10px;top:684.01px;font-size:19.6px;color:#d8d9da;-webkit-text-stroke:0.25px #d8d9da;transform:translateX(-50%) scaleX(0.9481);transform-origin:50% 50%;">13:25</span>
<span class="t" style="left:1711.50px;top:684.01px;font-size:19.6px;color:#d8d9da;-webkit-text-stroke:0.25px #d8d9da;transform:translateX(-50%) scaleX(0.9481);transform-origin:50% 50%;">13:30</span>
<span class="t" style="left:1875.90px;top:684.01px;font-size:19.6px;color:#d8d9da;-webkit-text-stroke:0.25px #d8d9da;transform:translateX(-50%) scaleX(0.9481);transform-origin:50% 50%;">13:35</span>
<div style="left:1486.20px;top:732.10px;width:20.90px;height:5.40px;background:#0a50a1;border-radius:1.5px;"></div>
<span class="t" style="left:1513.40px;top:725.90px;font-size:19.25px;color:#d8d9da;-webkit-text-stroke:0.2px #d8d9da;">daemon</span>
<div style="left:1601.50px;top:732.10px;width:20.90px;height:5.40px;background:#82b5d8;border-radius:1.5px;"></div>
<span class="t" style="left:1628.70px;top:725.90px;font-size:19.25px;color:#d8d9da;-webkit-text-stroke:0.2px #d8d9da;transform:scaleX(0.9917);transform-origin:0 50%;">non-deamon</span>
<div style="left:1755.00px;top:732.10px;width:20.90px;height:5.40px;background:#bf1b00;border-radius:1.5px;"></div>
<span class="t" style="left:1781.80px;top:725.90px;font-size:19.25px;color:#d8d9da;-webkit-text-stroke:0.2px #d8d9da;transform:scaleX(0.9772);transform-origin:0 50%;">peak</span>
<svg style="left:2055px;top:366px;" width="481" height="401" viewBox="2055 366 481 401"><g stroke="#4f4f52" stroke-width="1.35" fill="none"><path d="M2145.9 444.7 H2497.2"/><path d="M2145.9 492.1 H2497.2"/><path d="M2145.9 541.0 H2497.2"/><path d="M2145.9 588.3 H2497.2"/><path d="M2145.9 637.2 H2497.2"/><path d="M2176.7 444.0 V637.2"/><path d="M2294.4 444.0 V637.2"/><path d="M2412.0 444.0 V637.2"/></g><rect x="2425.3" y="464.0" width="68.0" height="173.2" fill="#eab839" fill-opacity="0.1"/><path d="M2425.3 542.7 L2429.4 542.7 L2435.0 479.7 L2458.2 479.7 L2464.2 475.3 L2493.3 475.3 L2493.3 637.2 L2425.3 637.2 Z" fill="#7eb26d" fill-opacity="0.1"/><g fill="#ef843c"><rect x="2148.31" y="616.9" width="3.9" height="20.3"/><rect x="2154.16" y="626.6" width="3.9" height="10.6"/><rect x="2160.01" y="626.6" width="3.9" height="10.6"/><rect x="2165.87" y="626.6" width="3.9" height="10.6"/><rect x="2171.72" y="616.9" width="3.9" height="20.3"/><rect x="2177.57" y="626.6" width="3.9" height="10.6"/><rect x="2183.43" y="626.6" width="3.9" height="10.6"/><rect x="2189.28" y="626.6" width="3.9" height="10.6"/><rect x="2195.13" y="616.9" width="3.9" height="20.3"/><rect x="2200.98" y="626.6" width="3.9" height="10.6"/><rect x="2206.84" y="626.6" width="3.9" height="10.6"/><rect x="2212.69" y="626.6" width="3.9" height="10.6"/><rect x="2218.54" y="616.9" width="3.9" height="20.3"/><rect x="2224.40" y="626.6" width="3.9" height="10.6"/><rect x="2230.25" y="626.6" width="3.9" height="10.6"/><rect x="2236.10" y="626.6" width="3.9" height="10.6"/><rect x="2241.96" y="616.9" width="3.9" height="20.3"/><rect x="2247.81" y="626.6" width="3.9" height="10.6"/><rect x="2253.66" y="626.6" width="3.9" height="10.6"/><rect x="2259.52" y="626.6" width="3.9" height="10.6"/><rect x="2265.37" y="616.9" width="3.9" height="20.3"/><rect x="2271.22" y="626.6" width="3.9" height="10.6"/><rect x="2277.07" y="626.6" width="3.9" height="10.6"/><rect x="2282.93" y="626.6" width="3.9" height="10.6"/><rect x="2288.78" y="616.9" width="3.9" height="20.3"/><rect x="2294.63" y="626.6" width="3.9" height="10.6"/><rect x="2300.49" y="626.6" width="3.9" height="10.6"/><rect x="2306.34" y="626.6" width="3.9" height="10.6"/><rect x="2312.19" y="616.9" width="3.9" height="20.3"/><rect x="2318.05" y="626.6" width="3.9" height="10.6"/><rect x="2323.90" y="626.6" width="3.9" height="10.6"/><rect x="2329.75" y="626.6" width="3.9" height="10.6"/><rect x="2335.61" y="616.9" width="3.9" height="20.3"/><rect x="2341.46" y="626.6" width="3.9" height="10.6"/><rect x="2347.31" y="626.6" width="3.9" height="10.6"/><rect x="2353.16" y="626.6" width="3.9" height="10.6"/><rect x="2359.02" y="616.9" width="3.9" height="20.3"/><rect x="2364.87" y="626.6" width="3.9" height="10.6"/><rect x="2370.72" y="626.6" width="3.9" height="10.6"/><rect x="2376.58" y="626.6" width="3.9" height="10.6"/><rect x="2382.43" y="616.9" width="3.9" height="20.3"/><rect x="2388.28" y="626.6" width="3.9" height="10.6"/><rect x="2394.14" y="626.6" width="3.9" height="10.6"/><rect x="2399.99" y="626.6" width="3.9" height="10.6"/><rect x="2405.84" y="616.9" width="3.9" height="20.3"/><rect x="2411.69" y="626.6" width="3.9" height="10.6"/><rect x="2417.55" y="626.6" width="3.9" height="10.6"/></g><rect x="2423.39" y="461.8" width="3.9" height="36.0" fill="#ef843c"/><rect x="2423.39" y="497.9" width="3.9" height="139.3" fill="#629e51"/><rect x="2434.98" y="574.0" width="3.9" height="54.2" fill="#ef843c"/><rect x="2434.98" y="628.2" width="3.9" height="9.0" fill="#629e51"/><rect x="2464.12" y="571.5" width="3.9" height="61.1" fill="#ef843c"/><rect x="2464.12" y="632.6" width="3.9" height="4.6" fill="#629e51"/><path d="M2425.3 464.0 H2493.3" stroke="#eab839" stroke-width="1.75" fill="none"/><path d="M2425.3 542.7 L2429.4 542.7 L2435.0 479.7 L2458.2 479.7 L2464.2 475.3 L2493.3 475.3" stroke="#7eb26d" stroke-width="1.75" fill="none"/></svg>
<span class="t" style="left:2135.30px;top:433.91px;font-size:19.6px;color:#d8d9da;-webkit-text-stroke:0.25px #d8d9da;transform:translateX(-100%) scaleX(0.9477);transform-origin:100% 50%;">400 MB</span>
<span class="t" style="left:2135.30px;top:482.91px;font-size:19.6px;color:#d8d9da;-webkit-text-stroke:0.25px #d8d9da;transform:translateX(-100%) scaleX(0.9477);transform-origin:100% 50%;">300 MB</span>
<span class="t" style="left:2135.30px;top:529.61px;font-size:19.6px;color:#d8d9da;-webkit-text-stroke:0.25px #d8d9da;transform:translateX(-100%) scaleX(0.9477);transform-origin:100% 50%;">200 MB</span>
<span class="t" style="left:2135.30px;top:578.91px;font-size:19.6px;color:#d8d9da;-webkit-text-stroke:0.25px #d8d9da;transform:translateX(-100%) scaleX(0.9477);transform-origin:100% 50%;">100 MB</span>
<span class="t" style="left:2135.30px;top:626.01px;font-size:19.6px;color:#d8d9da;-webkit-text-stroke:0.25px #d8d9da;transform:translateX(-100%) scaleX(0.8769);transform-origin:100% 50%;">0 B</span>
<span class="t" style="left:2176.70px;top:648.31px;font-size:19.6px;color:#d8d9da;-webkit-text-stroke:0.25px #d8d9da;transform:translateX(-50%) scaleX(0.9481);transform-origin:50% 50%;">13:25</span>
<span class="t" style="left:2294.40px;top:648.31px;font-size:19.6px;color:#d8d9da;-webkit-text-stroke:0.25px #d8d9da;transform:translateX(-50%) scaleX(0.9481);transform-origin:50% 50%;">13:30</span>
<span class="t" style="left:2412.00px;top:648.31px;font-size:19.6px;color:#d8d9da;-webkit-text-stroke:0.25px #d8d9da;transform:translateX(-50%) scaleX(0.9481);transform-origin:50% 50%;">13:35</span>
<div style="left:2086.30px;top:698.30px;width:20.90px;height:5.40px;background:#7eb26d;border-radius:1.5px;"></div>
<span class="t" style="left:2114.10px;top:692.10px;font-size:19.25px;color:#d8d9da;-webkit-text-stroke:0.2px #d8d9da;transform:scaleX(0.9587);transform-origin:0 50%;">Live Data Size</span>
<div style="left:2251.70px;top:698.30px;width:20.90px;height:5.40px;background:#eab839;border-radius:1.5px;"></div>
<span class="t" style="left:2279.20px;top:692.10px;font-size:19.25px;color:#d8d9da;-webkit-text-stroke:0.2px #d8d9da;transform:scaleX(0.9681);transform-origin:0 50%;">Max Data Size</span>
<div style="left:2086.30px;top:732.10px;width:20.90px;height:5.40px;background:#ef843c;border-radius:1.5px;"></div>
<span class="t" style="left:2114.10px;top:725.90px;font-size:19.25px;color:#d8d9da;-webkit-text-stroke:0.2px #d8d9da;transform:scaleX(1.0126);transform-origin:0 50%;">Allocated Memory</span>
<div style="left:2288.30px;top:732.10px;width:20.90px;height:5.40px;background:#629e51;border-radius:1.5px;"></div>
<span class="t" style="left:2315.50px;top:725.90px;font-size:19.25px;color:#d8d9da;-webkit-text-stroke:0.2px #d8d9da;transform:scaleX(1.0112);transform-origin:0 50%;">Promoted Memory</span>
<svg style="left:854px;top:786px;" width="581" height="401" viewBox="854 786 581 401"><g stroke="#4f4f52" stroke-width="1.35" fill="none"><path d="M945.8 864.7 H1396.0"/><path d="M945.8 940.0 H1396.0"/><path d="M945.8 1015.3 H1396.0"/><path d="M945.8 1090.3 H1396.0"/><path d="M987.2 864.0 V1090.3"/><path d="M1136.1 864.0 V1090.3"/><path d="M1286.3 864.0 V1090.3"/></g><rect x="945.8" y="1070.3" width="445.4" height="20.0" fill="#447ebc"/><rect x="945.8" y="1071.6" width="445.4" height="18.7" fill="#82b5d8"/><path d="M945.8 890.4 H1391.2" stroke="#bf1b00" stroke-width="7.2" fill="none"/></svg>
<span class="t" style="left:934.60px;top:853.91px;font-size:19.6px;color:#d8d9da;-webkit-text-stroke:0.25px #d8d9da;transform:translateX(-100%) scaleX(0.8918);transform-origin:100% 50%;">1.5 GB</span>
<span class="t" style="left:934.60px;top:928.71px;font-size:19.6px;color:#d8d9da;-webkit-text-stroke:0.25px #d8d9da;transform:translateX(-100%) scaleX(0.8918);transform-origin:100% 50%;">1.0 GB</span>
<span class="t" style="left:934.60px;top:1003.81px;font-size:19.6px;color:#d8d9da;-webkit-text-stroke:0.25px #d8d9da;transform:translateX(-100%) scaleX(0.9447);transform-origin:100% 50%;">500 MB</span>
<span class="t" style="left:934.60px;top:1081.01px;font-size:19.6px;color:#d8d9da;-webkit-text-stroke:0.25px #d8d9da;transform:translateX(-100%) scaleX(0.8769);transform-origin:100% 50%;">0 B</span>
<span class="t" style="left:987.20px;top:1104.01px;font-size:19.6px;color:#d8d9da;-webkit-text-stroke:0.25px #d8d9da;transform:translateX(-50%) scaleX(0.9481);transform-origin:50% 50%;">13:25</span>
<span class="t" style="left:1136.10px;top:1104.01px;font-size:19.6px;color:#d8d9da;-webkit-text-stroke:0.25px #d8d9da;transform:translateX(-50%) scaleX(0.9481);transform-origin:50% 50%;">13:30</span>
<span class="t" style="left:1286.30px;top:1104.01px;font-size:19.6px;color:#d8d9da;-webkit-text-stroke:0.25px #d8d9da;transform:translateX(-50%) scaleX(0.9481);transform-origin:50% 50%;">13:35</span>
<div style="left:886.20px;top:1152.10px;width:20.90px;height:5.40px;background:#bf1b00;border-radius:1.5px;"></div>
<span class="t" style="left:913.40px;top:1145.90px;font-size:19.25px;color:#d8d9da;-webkit-text-stroke:0.2px #d8d9da;transform:scaleX(0.9897);transform-origin:0 50%;">max</span>
<div style="left:968.00px;top:1152.10px;width:20.90px;height:5.40px;background:#447ebc;border-radius:1.5px;"></div>
<span class="t" style="left:995.50px;top:1145.90px;font-size:19.25px;color:#d8d9da;-webkit-text-stroke:0.2px #d8d9da;transform:scaleX(1.0406);transform-origin:0 50%;">committed</span>
<div style="left:1106.40px;top:1152.10px;width:20.90px;height:5.40px;background:#82b5d8;border-radius:1.5px;"></div>
<span class="t" style="left:1133.90px;top:1145.90px;font-size:19.25px;color:#d8d9da;-webkit-text-stroke:0.2px #d8d9da;transform:scaleX(0.9844);transform-origin:0 50%;">used</span>
<svg style="left:1454px;top:786px;" width="581" height="401" viewBox="1454 786 581 401"><g stroke="#4f4f52" stroke-width="1.35" fill="none"><path d="M1502.3 864.7 H1996.0"/><path d="M1502.3 912.1 H1996.0"/><path d="M1502.3 961.0 H1996.0"/><path d="M1502.3 1008.3 H1996.0"/><path d="M1502.3 1056.9 H1996.0"/><path d="M1547.1 864.0 V1056.9"/><path d="M1711.5 864.0 V1056.9"/><path d="M1875.9 864.0 V1056.9"/></g><path d="M1502.3 1022.7 L1603.5 1022.7 L1612.2 1018.0 L1620.7 1022.7 L1818.0 1022.7 L1826.4 1018.0 L1834.9 1022.7 L1990.9 1022.7 L1990.9 1056.9 L1502.3 1056.9 Z" fill="#6ed0e0" fill-opacity="0.4"/><path d="M1502.3 979.2 L1595.6 979.2 L1603.8 984.2 L1612.2 974.8 L1620.7 979.2 L1818.0 979.2 L1826.4 974.8 L1834.9 979.2 L1858.7 979.2 L1867.2 984.2 L1875.3 984.2 L1883.8 979.2 L1990.9 979.2 L1990.9 1022.7 L1834.9 1022.7 L1826.4 1018.0 L1818.0 1022.7 L1620.7 1022.7 L1612.2 1018.0 L1603.5 1022.7 L1502.3 1022.7 Z" fill="#e24d42" fill-opacity="0.4"/><path d="M1502.3 888.0 L1867.2 888.0 L1875.3 892.7 L1883.8 888.0 L1990.9 888.0 L1990.9 979.2 L1883.8 979.2 L1875.3 984.2 L1867.2 984.2 L1858.7 979.2 L1834.9 979.2 L1826.4 974.8 L1818.0 979.2 L1620.7 979.2 L1612.2 974.8 L1603.8 984.2 L1595.6 979.2 L1502.3 979.2 Z" fill="#1f78c1" fill-opacity="0.4"/><path d="M1502.3 1056.3 H1990.9" stroke="#eab839" stroke-width="1.75"/><path d="M1502.3 1022.7 L1603.5 1022.7 L1612.2 1018.0 L1620.7 1022.7 L1818.0 1022.7 L1826.4 1018.0 L1834.9 1022.7 L1990.9 1022.7" stroke="#ef843c" stroke-width="1.75" fill="none"/><path d="M1502.3 979.2 L1595.6 979.2 L1603.8 984.2 L1612.2 974.8 L1620.7 979.2 L1818.0 979.2 L1826.4 974.8 L1834.9 979.2 L1858.7 979.2 L1867.2 984.2 L1875.3 984.2 L1883.8 979.2 L1990.9 979.2" stroke="#e24d42" stroke-width="1.75" fill="none"/><path d="M1502.3 888.0 L1867.2 888.0 L1875.3 892.7 L1883.8 888.0 L1990.9 888.0" stroke="#1f78c1" stroke-width="1.75" fill="none"/></svg>
<span class="t" style="left:1491.40px;top:853.91px;font-size:19.6px;color:#d8d9da;-webkit-text-stroke:0.25px #d8d9da;transform:translateX(-100%) scaleX(0.9451);transform-origin:100% 50%;">40</span>
<span class="t" style="left:1491.40px;top:902.91px;font-size:19.6px;color:#d8d9da;-webkit-text-stroke:0.25px #d8d9da;transform:translateX(-100%) scaleX(0.9451);transform-origin:100% 50%;">30</span>
<span class="t" style="left:1491.40px;top:949.61px;font-size:19.6px;color:#d8d9da;-webkit-text-stroke:0.25px #d8d9da;transform:translateX(-100%) scaleX(0.9451);transform-origin:100% 50%;">20</span>
<span class="t" style="left:1491.40px;top:998.91px;font-size:19.6px;color:#d8d9da;-webkit-text-stroke:0.25px #d8d9da;transform:translateX(-100%) scaleX(0.9451);transform-origin:100% 50%;">10</span>
<span class="t" style="left:1491.40px;top:1046.01px;font-size:19.6px;color:#d8d9da;-webkit-text-stroke:0.25px #d8d9da;transform:translateX(-100%) scaleX(0.9169);transform-origin:100% 50%;">0</span>
<span class="t" style="left:1547.10px;top:1068.21px;font-size:19.6px;color:#d8d9da;-webkit-text-stroke:0.25px #d8d9da;transform:translateX(-50%) scaleX(0.9481);transform-origin:50% 50%;">13:25</span>
<span class="t" style="left:1711.50px;top:1068.21px;font-size:19.6px;color:#d8d9da;-webkit-text-stroke:0.25px #d8d9da;transform:translateX(-50%) scaleX(0.9481);transform-origin:50% 50%;">13:30</span>
<span class="t" style="left:1875.90px;top:1068.21px;font-size:19.6px;color:#d8d9da;-webkit-text-stroke:0.25px #d8d9da;transform:translateX(-50%) scaleX(0.9481);transform-origin:50% 50%;">13:35</span>
<div style="left:1486.20px;top:1118.20px;width:20.90px;height:5.40px;background:#7eb26d;border-radius:1.5px;"></div>
<span class="t" style="left:1513.70px;top:1112.00px;font-size:19.25px;color:#d8d9da;-webkit-text-stroke:0.2px #d8d9da;transform:scaleX(0.8933);transform-origin:0 50%;">BLOCKED</span>
<div style="left:1614.60px;top:1118.20px;width:20.90px;height:5.40px;background:#eab839;border-radius:1.5px;"></div>
<span class="t" style="left:1642.40px;top:1112.00px;font-size:19.25px;color:#d8d9da;-webkit-text-stroke:0.2px #d8d9da;transform:scaleX(0.9016);transform-origin:0 50%;">NEW</span>
<div style="left:1701.70px;top:1118.20px;width:20.90px;height:5.40px;background:#6ed0e0;border-radius:1.5px;"></div>
<span class="t" style="left:1729.20px;top:1112.00px;font-size:19.25px;color:#d8d9da;-webkit-text-stroke:0.2px #d8d9da;transform:scaleX(0.9271);transform-origin:0 50%;">RUNNABLE</span>
<div style="left:1845.20px;top:1118.20px;width:20.90px;height:5.40px;background:#ef843c;border-radius:1.5px;"></div>
<span class="t" style="left:1872.60px;top:1112.00px;font-size:19.25px;color:#d8d9da;-webkit-text-stroke:0.2px #d8d9da;transform:scaleX(0.9329);transform-origin:0 50%;">TERMINATED</span>
<div style="left:1486.20px;top:1152.10px;width:20.90px;height:5.40px;background:#e24d42;border-radius:1.5px;"></div>
<span class="t" style="left:1513.70px;top:1145.90px;font-size:19.25px;color:#d8d9da;-webkit-text-stroke:0.2px #d8d9da;transform:scaleX(0.9388);transform-origin:0 50%;">TIMED_WAITING</span>
<div style="left:1675.40px;top:1152.10px;width:20.90px;height:5.40px;background:#1f78c1;border-radius:1.5px;"></div>
<span class="t" style="left:1703.20px;top:1145.90px;font-size:19.25px;color:#d8d9da;-webkit-text-stroke:0.2px #d8d9da;transform:scaleX(0.9372);transform-origin:0 50%;">WAITING</span>
<svg style="left:2055px;top:786px;" width="481" height="401" viewBox="2055 786 481 401"><g stroke="#4f4f52" stroke-width="1.35" fill="none"><path d="M2142.7 864.7 H2497.2"/><path d="M2142.7 921.0 H2497.2"/><path d="M2142.7 976.7 H2497.2"/><path d="M2142.7 1034.5 H2497.2"/><path d="M2142.7 1090.4 H2497.2"/><path d="M2175.0 864.0 V1090.4"/><path d="M2292.8 864.0 V1090.4"/><path d="M2410.3 864.0 V1090.4"/></g><g fill="#7eb26d"><rect x="2145.22" y="1089.2" width="3.8" height="1.2"/><rect x="2151.15" y="1089.9" width="3.8" height="0.5"/><rect x="2157.07" y="1089.9" width="3.8" height="0.5"/><rect x="2163.00" y="1089.9" width="3.8" height="0.5"/><rect x="2168.92" y="1089.2" width="3.8" height="1.2"/><rect x="2174.85" y="1089.9" width="3.8" height="0.5"/><rect x="2180.77" y="1089.9" width="3.8" height="0.5"/><rect x="2186.69" y="1089.9" width="3.8" height="0.5"/><rect x="2192.62" y="1089.2" width="3.8" height="1.2"/><rect x="2198.54" y="1089.9" width="3.8" height="0.5"/><rect x="2204.47" y="1089.9" width="3.8" height="0.5"/><rect x="2210.39" y="1089.9" width="3.8" height="0.5"/><rect x="2216.32" y="1089.2" width="3.8" height="1.2"/><rect x="2222.24" y="1089.9" width="3.8" height="0.5"/><rect x="2228.16" y="1089.9" width="3.8" height="0.5"/><rect x="2234.09" y="1089.9" width="3.8" height="0.5"/><rect x="2240.01" y="1089.2" width="3.8" height="1.2"/><rect x="2245.94" y="1089.9" width="3.8" height="0.5"/><rect x="2251.86" y="1089.9" width="3.8" height="0.5"/><rect x="2257.79" y="1089.9" width="3.8" height="0.5"/><rect x="2263.71" y="1089.2" width="3.8" height="1.2"/><rect x="2269.63" y="1089.9" width="3.8" height="0.5"/><rect x="2275.56" y="1089.9" width="3.8" height="0.5"/><rect x="2281.48" y="1089.9" width="3.8" height="0.5"/><rect x="2287.41" y="1089.2" width="3.8" height="1.2"/><rect x="2293.33" y="1089.9" width="3.8" height="0.5"/><rect x="2299.25" y="1089.9" width="3.8" height="0.5"/><rect x="2305.18" y="1089.9" width="3.8" height="0.5"/><rect x="2311.10" y="1089.2" width="3.8" height="1.2"/><rect x="2317.03" y="1089.9" width="3.8" height="0.5"/><rect x="2322.95" y="1089.9" width="3.8" height="0.5"/><rect x="2328.88" y="1089.9" width="3.8" height="0.5"/><rect x="2334.80" y="1089.2" width="3.8" height="1.2"/><rect x="2340.72" y="1089.9" width="3.8" height="0.5"/><rect x="2346.65" y="1089.9" width="3.8" height="0.5"/><rect x="2352.57" y="1089.9" width="3.8" height="0.5"/><rect x="2358.50" y="1089.2" width="3.8" height="1.2"/><rect x="2364.42" y="1089.9" width="3.8" height="0.5"/><rect x="2370.35" y="1089.9" width="3.8" height="0.5"/><rect x="2376.27" y="1089.9" width="3.8" height="0.5"/><rect x="2382.19" y="1089.2" width="3.8" height="1.2"/><rect x="2388.12" y="1089.9" width="3.8" height="0.5"/><rect x="2394.04" y="1089.9" width="3.8" height="0.5"/><rect x="2399.97" y="1089.9" width="3.8" height="0.5"/><rect x="2405.89" y="1089.2" width="3.8" height="1.2"/></g><rect x="2422.45" y="974.9" width="3.9" height="115.5" fill="#7eb26d"/><rect x="2434.35" y="914.1" width="3.9" height="176.3" fill="#bf1b00"/><rect x="2463.80" y="965.5" width="3.9" height="124.9" fill="#bf1b00"/></svg>
<span class="t" style="left:2133.80px;top:853.91px;font-size:19.6px;color:#d8d9da;-webkit-text-stroke:0.25px #d8d9da;transform:translateX(-100%) scaleX(0.9392);transform-origin:100% 50%;">2.0 s</span>
<span class="t" style="left:2133.80px;top:910.11px;font-size:19.6px;color:#d8d9da;-webkit-text-stroke:0.25px #d8d9da;transform:translateX(-100%) scaleX(0.9392);transform-origin:100% 50%;">1.5 s</span>
<span class="t" style="left:2133.80px;top:967.91px;font-size:19.6px;color:#d8d9da;-webkit-text-stroke:0.25px #d8d9da;transform:translateX(-100%) scaleX(0.9392);transform-origin:100% 50%;">1.0 s</span>
<span class="t" style="left:2133.80px;top:1024.11px;font-size:19.6px;color:#d8d9da;-webkit-text-stroke:0.25px #d8d9da;transform:translateX(-100%) scaleX(0.9616);transform-origin:100% 50%;">500 ms</span>
<span class="t" style="left:2133.80px;top:1081.01px;font-size:19.6px;color:#d8d9da;-webkit-text-stroke:0.25px #d8d9da;transform:translateX(-100%) scaleX(0.9772);transform-origin:100% 50%;">0 ms</span>
<span class="t" style="left:2175.00px;top:1104.01px;font-size:19.6px;color:#d8d9da;-webkit-text-stroke:0.25px #d8d9da;transform:translateX(-50%) scaleX(0.9481);transform-origin:50% 50%;">13:25</span>
<span class="t" style="left:2292.80px;top:1104.01px;font-size:19.6px;color:#d8d9da;-webkit-text-stroke:0.25px #d8d9da;transform:translateX(-50%) scaleX(0.9481);transform-origin:50% 50%;">13:30</span>
<span class="t" style="left:2410.30px;top:1104.01px;font-size:19.6px;color:#d8d9da;-webkit-text-stroke:0.25px #d8d9da;transform:translateX(-50%) scaleX(0.9481);transform-origin:50% 50%;">13:35</span>
<div style="left:2086.30px;top:1152.10px;width:20.90px;height:5.40px;background:#7eb26d;border-radius:1.5px;"></div>
<span class="t" style="left:2114.10px;top:1145.90px;font-size:19.25px;color:#d8d9da;-webkit-text-stroke:0.2px #d8d9da;transform:scaleX(0.9592);transform-origin:0 50%;">Minor GC</span>
<div style="left:2211.90px;top:1152.10px;width:20.90px;height:5.40px;background:#bf1b00;border-radius:1.5px;"></div>
<span class="t" style="left:2239.40px;top:1145.90px;font-size:19.25px;color:#d8d9da;-webkit-text-stroke:0.2px #d8d9da;transform:scaleX(0.9592);transform-origin:0 50%;">Major GC</span>
<svg style="left:154px;top:786px;" width="381" height="401" viewBox="154 786 381 401"><path d="M196.54 1110.17 A156.2 156.2 0 1 1 493.66 1110.17 L437.35 1091.87 A97.0 97.0 0 1 0 252.85 1091.87 Z" fill="#262626"/><path d="M185.42 1113.78 A167.9 167.9 0 0 1 497.02 990.41 L487.79 994.75 A157.7 157.7 0 0 0 195.12 1110.63 Z" fill="#299c46"/><path d="M497.02 990.41 A167.9 167.9 0 0 1 512.67 1051.36 L502.49 1052.00 A157.7 157.7 0 0 0 487.79 994.75 Z" fill="#dc7a27"/><path d="M512.67 1051.36 A167.9 167.9 0 0 1 504.78 1113.78 L495.08 1110.63 A157.7 157.7 0 0 0 502.49 1052.00 Z" fill="#d44a3a"/><path d="M196.74 1108.80 L252.42 1091.20" stroke="#299c46" stroke-width="2.9"/></svg>
<span class="t" style="left:343.90px;top:1047.61px;font-size:49.6px;color:#299c46;-webkit-text-stroke:0.7px #299c46;transform:translateX(-50%) scaleX(0.9551);transform-origin:50% 50%;">0.2643%</span>
<span class="t" style="left:694.00px;top:888.96px;font-size:33.6px;color:#d8d9da;-webkit-text-stroke:0.9px #d8d9da;transform:translateX(-50%) scaleX(0.9746);transform-origin:50% 50%;">13891</span>
<span class="t" style="left:694.60px;top:1099.16px;font-size:33.6px;color:#d8d9da;-webkit-text-stroke:0.9px #d8d9da;transform:translateX(-50%) scaleX(0.9743);transform-origin:50% 50%;">80</span>
<div style="left:2523.0px;top:1249.1px;width:8.5px;height:2.9px;background:#5b5b5d"></div><div style="left:2528.6px;top:1244.3px;width:2.9px;height:7.7px;background:#5b5b5d"></div>
</div>
</body></html>
